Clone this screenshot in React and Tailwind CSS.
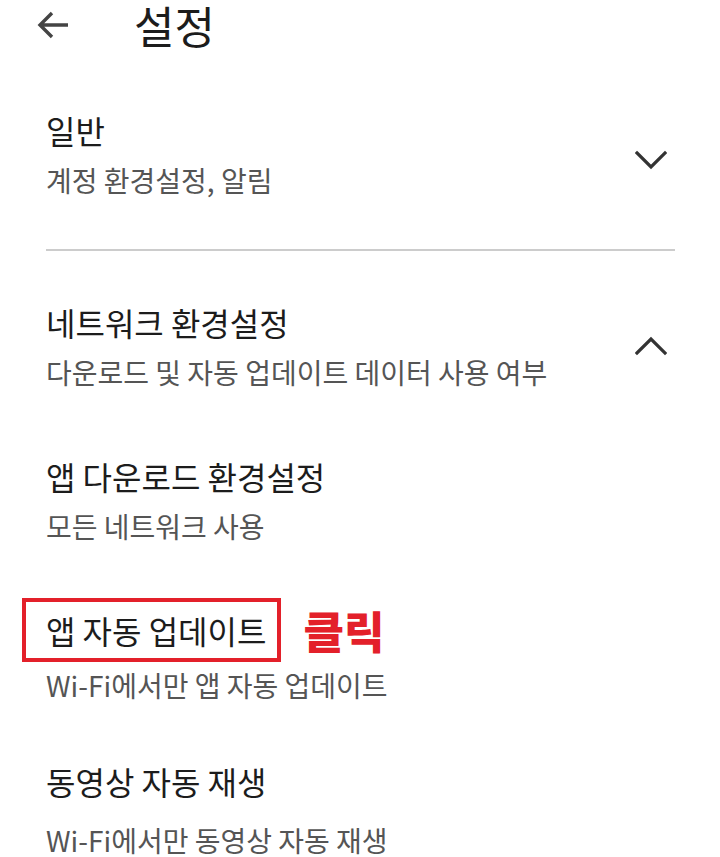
const font = { fontFamily: '"Noto Sans CJK KR", "Noto Sans", sans-serif' };

function Chevron({ up }) {
  return (
    <svg
      width="32"
      height="20"
      viewBox="0 0 32 20"
      fill="none"
      className={up ? "mr-[8px]" : "mr-[8px] mt-[12px]"}
    >
      <polyline
        points={up ? "2,17 16,3 30,17" : "2,3 16,17 30,3"}
        stroke="#333333"
        strokeWidth="3.2"
        strokeLinecap="square"
      />
    </svg>
  );
}

function Item({ title, desc, gap = "mt-[12px]", descLeading = "leading-[36px]" }) {
  return (
    <div>
      <div className="text-[32px] leading-[40px] text-[#1c1c1c]">{title}</div>
      <div className={`${gap} ${descLeading} text-[28px] text-[#555555]`}>{desc}</div>
    </div>
  );
}

export default function App() {
  return (
    <div className="w-[720px] h-[857px] bg-white overflow-hidden" style={font}>
      {/* top bar */}
      <div className="flex items-center h-[50px] pl-[36px]">
        <svg width="34" height="30" viewBox="0 0 34 30" fill="none">
          <path d="M32 15H4M16 3 4 15l12 12" stroke="#444444" strokeWidth="3.4" />
        </svg>
        <h1 className="ml-[64px] text-[44px] leading-[50px] text-[#1c1c1c]">설정</h1>
      </div>

      <div className="pl-[46px] pr-[45px]">
        {/* 일반 */}
        <div className="flex items-center justify-between pt-[60px] pb-[51px] border-b-2 border-[#cccccc]">
          <Item title="일반" desc="계정 환경설정, 알림" />
          <Chevron />
        </div>

        {/* 네트워크 환경설정 */}
        <div className="flex items-center justify-between pt-[51px]">
          <Item title="네트워크 환경설정" desc="다운로드 및 자동 업데이트 데이터 사용 여부" gap="mt-[12px]" />
          <Chevron up />
        </div>

        <div className="flex flex-col mt-[66px]">
          <Item title="앱 다운로드 환경설정" desc="모든 네트워크 사용" gap="mt-[12px]" />

          {/* highlighted row */}
          <div className="mt-[54px]">
            <div className="flex items-center">
              <div className="-ml-[24px] h-[64px] flex items-center border-[4px] border-[#e3202a] pl-[20px] pr-[11px]">
                <span className="text-[32px] leading-none text-[#1c1c1c]">앱 자동 업데이트</span>
              </div>
              <span className="ml-[22px] text-[44px] font-black leading-none text-[#e3202a]">클릭</span>
            </div>
            <div className="mt-[5px] text-[28px] leading-[36px] text-[#555555]">Wi-Fi에서만 앱 자동 업데이트</div>
          </div>

          <div className="mt-[58px]">
            <Item
              title="동영상 자동 재생"
              desc="Wi-Fi에서만 동영상 자동 재생"
              gap="mt-[23px]"
              descLeading="leading-[32px]"
            />
          </div>
        </div>
      </div>
    </div>
  );
}
